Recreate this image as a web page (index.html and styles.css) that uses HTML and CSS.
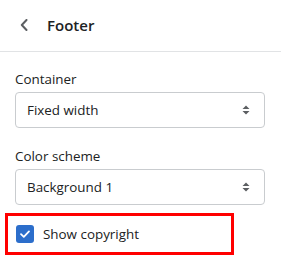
FILE: index.html
```html
<!DOCTYPE html>
<html>
<head>
<meta charset="utf-8">
<link rel="stylesheet" href="styles.css">
</head>
<body>
<div class="panel">
  <div class="header">
    <svg class="back" width="8" height="12" viewBox="0 0 8 12"><path d="M6.5 1 L1.8 6 L6.5 11" fill="none" stroke="#5c5f62" stroke-width="2" stroke-linecap="round" stroke-linejoin="round"/></svg>
    <span class="title">Footer</span>
  </div>
  <div class="body">
    <div class="field">
      <div class="label">Container</div>
      <div class="select">
        <span>Fixed width</span>
        <svg class="arrows" width="8" height="10" viewBox="0 0 8 10"><path d="M4 0.5 L7.5 4 H0.5 Z M4 9.5 L7.5 6 H0.5 Z" fill="#5c5f62"/></svg>
      </div>
    </div>
    <div class="field">
      <div class="label">Color scheme</div>
      <div class="select">
        <span>Background 1</span>
        <svg class="arrows" width="8" height="10" viewBox="0 0 8 10"><path d="M4 0.5 L7.5 4 H0.5 Z M4 9.5 L7.5 6 H0.5 Z" fill="#5c5f62"/></svg>
      </div>
    </div>
    <div class="check-row">
      <span class="checkbox">
        <svg width="12" height="10" viewBox="0 0 12 10"><path d="M2 5.2 L4.8 7.8 L10 2.4" fill="none" stroke="#fff" stroke-width="1.8" stroke-linecap="round" stroke-linejoin="round"/></svg>
      </span>
      <span class="check-label">Show copyright</span>
    </div>
  </div>
</div>
</body>
</html>
```
FILE: styles.css
```css
html, body {
  margin: 0;
  background: #fff;
}
body {
  font-family: "Segoe UI", "Open Sans", "Noto Sans", sans-serif;
  color: #202223;
  font-size: 13.4px;
  line-height: 20px;
}
.panel {
  width: 281px;
}
.header {
  border-bottom: 1px solid #e1e3e5;
  display: flex;
  align-items: center;
  padding-left: 20px;
  box-sizing: border-box;
  height: 52px;
}
.back {
  display: block;
  margin-top: -2px;
}
.title {
  margin-left: 19px;
  font-size: 15px;
  font-weight: 600;
  margin-top: -2px;
}
.body {
  padding: 17px 16px 0 15px;
}
.field {
  margin-bottom: 18px;
}
.field + .field {
  margin-bottom: 8px;
}
.label {
  margin-bottom: 3px;
}
.select {
  height: 36px;
  box-sizing: border-box;
  border: 1px solid #c9cccf;
  border-radius: 4px;
  display: flex;
  align-items: center;
  justify-content: space-between;
  padding: 0 14px 0 11px;
}
.arrows {
  display: block;
}
.check-row {
  margin-left: -10px;
  width: 229px;
  height: 42px;
  box-sizing: border-box;
  border: 3px solid #ff0000;
  display: flex;
  align-items: center;
  padding-left: 8px;
}
.checkbox {
  width: 18px;
  height: 18px;
  border-radius: 3px;
  background: #2c6ecb;
  display: flex;
  align-items: center;
  justify-content: center;
}
.checkbox svg {
  display: block;
}
.check-label {
  margin-left: 9px;
}
```
